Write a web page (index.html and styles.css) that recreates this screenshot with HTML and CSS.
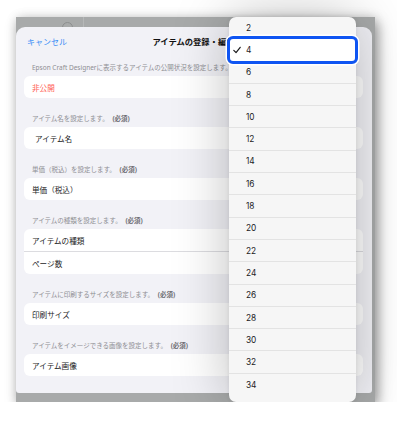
FILE: index.html
```html
<!DOCTYPE html>
<html lang="ja">
<head>
    <meta charset="UTF-8">
    <meta name="viewport" content="width=device-width, initial-scale=1.0">
    <title>アイテムの登録・編集</title>
    <link rel="stylesheet" href="styles.css">
</head>
<body>
    <div class="device">
        <div class="top-bar">
            <span class="top-circle"></span>
            <span class="top-divider"></span>
        </div>
        <div class="sheet">
            <div class="sheet-header">
                <span class="cancel">キャンセル</span>
                <span class="title">アイテムの登録・編集</span>
            </div>

            <div class="section-label">Epson Craft Designerに表示するアイテムの公開状況を設定します。</div>
            <div class="card">
                <div class="cell cell-red">非公開</div>
            </div>

            <div class="section-label">アイテム名を設定します。 <b>(必須)</b></div>
            <div class="card">
                <div class="cell cell-indent">アイテム名</div>
            </div>

            <div class="section-label">単価（税込）を設定します。 <b>(必須)</b></div>
            <div class="card">
                <div class="cell">単価（税込）</div>
            </div>

            <div class="section-label">アイテムの種類を設定します。 <b>(必須)</b></div>
            <div class="card">
                <div class="cell">アイテムの種類</div>
                <div class="cell">ページ数</div>
            </div>

            <div class="section-label">アイテムに印刷するサイズを設定します。 <b>(必須)</b></div>
            <div class="card">
                <div class="cell">印刷サイズ</div>
            </div>

            <div class="section-label">アイテムをイメージできる画像を設定します。 <b>(必須)</b></div>
            <div class="card">
                <div class="cell">アイテム画像</div>
            </div>
        </div>

        <div class="picker">
            <div class="picker-row"><span class="check"></span>2</div>
            <div class="picker-row selected">
                <span class="check">
                    <svg width="8" height="8" viewBox="0 0 10 10"><path d="M1 5.4 L3.8 8.3 L9 1.6" fill="none" stroke="#1c1c1e" stroke-width="1.5" stroke-linecap="round" stroke-linejoin="round"/></svg>
                </span>4
            </div>
            <div class="picker-row"><span class="check"></span>6</div>
            <div class="picker-row"><span class="check"></span>8</div>
            <div class="picker-row"><span class="check"></span>10</div>
            <div class="picker-row"><span class="check"></span>12</div>
            <div class="picker-row"><span class="check"></span>14</div>
            <div class="picker-row"><span class="check"></span>16</div>
            <div class="picker-row"><span class="check"></span>18</div>
            <div class="picker-row"><span class="check"></span>20</div>
            <div class="picker-row"><span class="check"></span>22</div>
            <div class="picker-row"><span class="check"></span>24</div>
            <div class="picker-row"><span class="check"></span>26</div>
            <div class="picker-row"><span class="check"></span>28</div>
            <div class="picker-row"><span class="check"></span>30</div>
            <div class="picker-row"><span class="check"></span>32</div>
            <div class="picker-row"><span class="check"></span>34</div>
        </div>
    </div>
</body>
</html>
```

FILE: styles.css
```css
* {
    margin: 0;
    padding: 0;
    box-sizing: border-box;
}

body {
    background: #ffffff;
    font-family: 'Noto Sans', 'Noto Sans CJK JP', sans-serif;
    color: #1c1c1e;
    overflow: hidden;
}

.device {
    position: relative;
    margin: 17px 0 0 16px;
    width: 359px;
    height: 385px;
    background: #a8aaaa;
    box-shadow: 3px 5px 12px rgba(0,0,0,0.35), 0 0 10px rgba(0,0,0,0.12);
}

.top-bar {
    height: 10px;
    display: flex;
    overflow: hidden;
}

.top-circle {
    width: 11px;
    height: 11px;
    margin: 5px 0 0 46px;
    border: 1px solid #8d8f8f;
    border-radius: 50%;
}

.top-divider {
    margin-left: 10px;
    border-left: 1px solid #b6b8b8;
}

.sheet {
    width: 356px;
    height: 366px;
    background: #f2f2f7;
    border-radius: 9px 9px 3px 3px;
    padding: 0 9px 0 8px;
    overflow: hidden;
}

.sheet-header {
    height: 28px;
    display: flex;
    align-items: center;
    position: relative;
}

.cancel {
    margin-left: 3px;
    font-size: 8px;
    color: #3b8ef6;
}

.title {
    position: absolute;
    left: 0;
    right: 0;
    text-align: center;
    font-size: 8.3px;
    font-weight: 700;
    color: #111;
}

.section-label {
    padding: 8px 0 3px 8px;
    line-height: 10px;
    font-size: 6.5px;
    color: #8e8e93;
    white-space: nowrap;
}

.section-label b {
    margin-left: 2px;
    color: #6e6e73;
    font-weight: 700;
}

.card + .section-label {
    margin-top: 8px;
}

.card {
    background: #ffffff;
    border-radius: 6px;
}

.cell {
    height: 22px;
    display: flex;
    align-items: center;
    padding-left: 8px;
    font-size: 7.6px;
    color: #1c1c1e;
}

.cell + .cell {
    height: 23px;
    border-top: 1px solid #dcdce0;
}

.cell-indent {
    padding-left: 11px;
}

.cell-red {
    color: #ff5b52;
}

.picker {
    position: absolute;
    left: 213px;
    top: 0;
    width: 127px;
    height: 385px;
    background: #f6f6f6;
    border-radius: 7px;
    box-shadow: 0 0 55px rgba(0,0,0,0.26), 0 0 4px rgba(0,0,0,0.08);
}

.picker-row {
    position: relative;
    height: 22.3px;
    display: flex;
    align-items: center;
    padding-left: 4px;
    font-family: 'Inter', 'Noto Sans', sans-serif;
    font-size: 8.3px;
    color: #1c1c1e;
    border-bottom: 1px solid #e3e3e3;
}

.picker-row:last-child {
    border-bottom: none;
}

.check {
    width: 13px;
    display: flex;
    align-items: center;
}

.picker-row.selected {
    background: #ffffff;
    border-bottom-color: transparent;
}

.picker-row.selected::after {
    content: '';
    position: absolute;
    top: -3px;
    bottom: -3px;
    left: -2px;
    right: -2px;
    border: 3px solid #0f55f2;
    border-radius: 6px;
    box-shadow: 0 0 0 1.5px #ffffff, inset 0 0 0 1px #ffffff;
}
```
